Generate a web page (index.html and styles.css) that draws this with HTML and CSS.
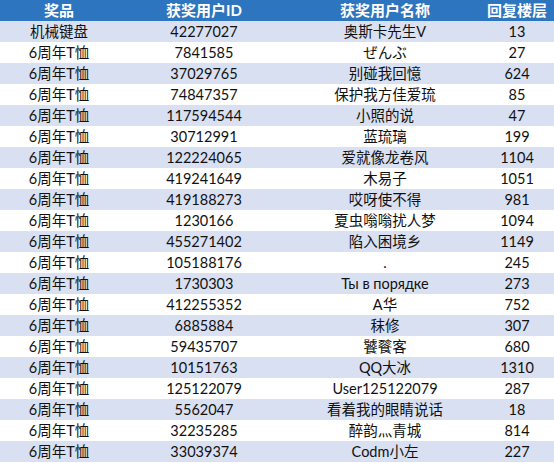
FILE: index.html
```html
<!DOCTYPE html>
<html>
<head>
  <meta charset="utf-8">
  <link rel="stylesheet" href="styles.css">
</head>
<body>
  <table class="prize-table">
    <colgroup>
      <col class="col-prize">
      <col class="col-id">
      <col class="col-name">
      <col class="col-floor">
    </colgroup>
    <thead>
      <tr>
        <th>奖品</th>
        <th>获奖用户ID</th>
        <th>获奖用户名称</th>
        <th>回复楼层</th>
      </tr>
    </thead>
    <tbody>
      <tr><td>机械键盘</td><td>42277027</td><td>奥斯卡先生V</td><td>13</td></tr>
      <tr><td>6周年T恤</td><td>7841585</td><td>ぜんぶ</td><td>27</td></tr>
      <tr><td>6周年T恤</td><td>37029765</td><td>别碰我回憶</td><td>624</td></tr>
      <tr><td>6周年T恤</td><td>74847357</td><td>保护我方佳爱琉</td><td>85</td></tr>
      <tr><td>6周年T恤</td><td>117594544</td><td>小照的说</td><td>47</td></tr>
      <tr><td>6周年T恤</td><td>30712991</td><td>蓝琉璃</td><td>199</td></tr>
      <tr><td>6周年T恤</td><td>122224065</td><td>爱就像龙卷风</td><td>1104</td></tr>
      <tr><td>6周年T恤</td><td>419241649</td><td>木易子</td><td>1051</td></tr>
      <tr><td>6周年T恤</td><td>419188273</td><td>哎呀使不得</td><td>981</td></tr>
      <tr><td>6周年T恤</td><td>1230166</td><td>夏虫嗡嗡扰人梦</td><td>1094</td></tr>
      <tr><td>6周年T恤</td><td>455271402</td><td>陷入困境乡</td><td>1149</td></tr>
      <tr><td>6周年T恤</td><td>105188176</td><td>.</td><td>245</td></tr>
      <tr><td>6周年T恤</td><td>1730303</td><td>Ты в порядке</td><td>273</td></tr>
      <tr><td>6周年T恤</td><td>412255352</td><td>A华</td><td>752</td></tr>
      <tr><td>6周年T恤</td><td>6885884</td><td>秣修</td><td>307</td></tr>
      <tr><td>6周年T恤</td><td>59435707</td><td>饕餮客</td><td>680</td></tr>
      <tr><td>6周年T恤</td><td>10151763</td><td>QQ大冰</td><td>1310</td></tr>
      <tr><td>6周年T恤</td><td>125122079</td><td>User125122079</td><td>287</td></tr>
      <tr><td>6周年T恤</td><td>5562047</td><td>看着我的眼睛说话</td><td>18</td></tr>
      <tr><td>6周年T恤</td><td>32235285</td><td>醉韵灬青城</td><td>814</td></tr>
      <tr><td>6周年T恤</td><td>33039374</td><td>Codm小左</td><td>227</td></tr>
    </tbody>
  </table>
</body>
</html>
```

FILE: styles.css
```css
* {
  margin: 0;
  padding: 0;
  box-sizing: border-box;
}
body {
  background: #fff;
  font-family: Lato, "Noto Sans CJK SC", sans-serif;
  font-size: 14.5px;
  color: #111;
}
.prize-table {
  width: 554px;
  border-collapse: collapse;
  table-layout: fixed;
}
.col-prize {
  width: 118px;
}
.col-id {
  width: 172px;
}
.col-name {
  width: 190px;
}
.col-floor {
  width: 74px;
}
.prize-table th,
.prize-table td {
  height: 21px;
  text-align: center;
  white-space: nowrap;
  line-height: 21px;
}
.prize-table th {
  background: #2e75c0;
  color: #fff;
  font-weight: bold;
  font-size: 15px;
}
.prize-table tbody tr:nth-child(odd) {
  background: #d9e0f1;
}
```
